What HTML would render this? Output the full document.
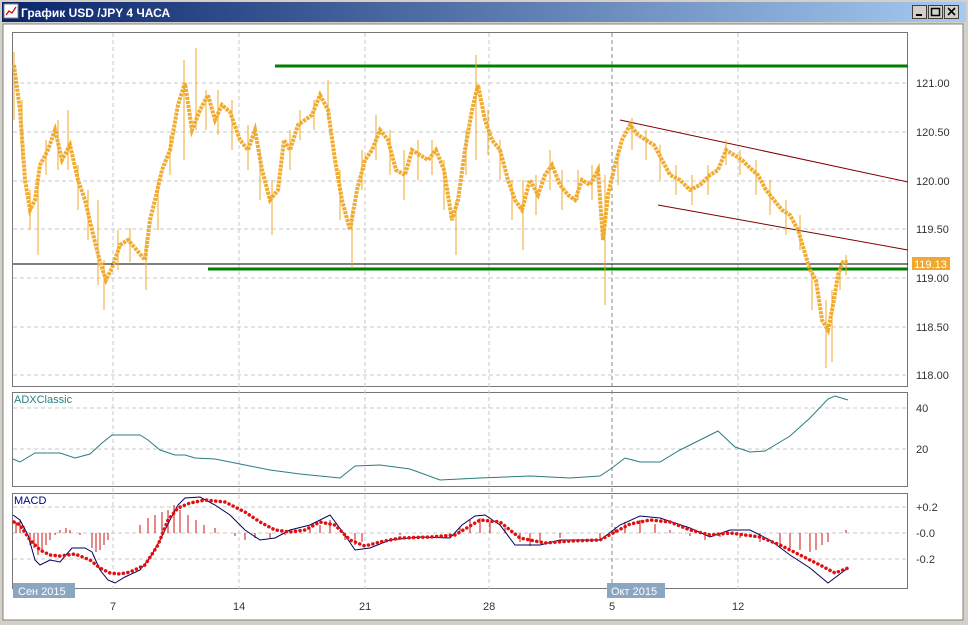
<!DOCTYPE html>
<html><head><meta charset="utf-8"><style>
body{margin:0;width:968px;height:625px;overflow:hidden;background:#d4d0c8;font-family:"Liberation Sans",sans-serif}
</style></head><body>
<svg width="968" height="625" xmlns="http://www.w3.org/2000/svg" style="position:absolute;left:0;top:0">
<defs><linearGradient id="tb" x1="0" x2="1"><stop offset="0" stop-color="#0a246a"/><stop offset="1" stop-color="#a6caf0"/></linearGradient></defs>
<rect x="0" y="0" width="968" height="625" fill="#d4d0c8"/>
<rect x="2" y="2" width="964" height="20" fill="url(#tb)"/>
<rect x="4" y="4" width="14" height="14" fill="#fff" stroke="#888"/>
<polyline points="6,15 9,11 12,13 16,7" fill="none" stroke="#c00" stroke-width="1.2"/>
<text x="21" y="17" font-size="12" font-weight="bold" fill="#fff">График USD /JPY  4 ЧАСА</text>
<g fill="#d4d0c8" stroke="#404040" stroke-width="1">
<rect x="912.5" y="5.5" width="14" height="13"/><rect x="928.5" y="5.5" width="14" height="13"/><rect x="944.5" y="5.5" width="14" height="13"/></g>
<rect x="916" y="14" width="6" height="2" fill="#000"/>
<rect x="931.5" y="8.5" width="8" height="7" fill="none" stroke="#000" stroke-width="1.5"/>
<path d="M948 8l7 7M955 8l-7 7" stroke="#000" stroke-width="1.6"/>
<rect x="3" y="24" width="960" height="596" fill="#fff" stroke="#808080"/>
<g fill="#fff" stroke="#777"><rect x="12.5" y="32.5" width="895" height="354"/><rect x="12.5" y="392.5" width="895" height="94"/><rect x="12.5" y="493.5" width="895" height="95"/></g>
<g stroke="#c8c8c8" stroke-dasharray="4,3">
<path d="M13 83H908M13 132H908M13 181H908M13 229H908M13 278H908M13 327H908M13 375H908M13 408H908M13 449H908M13 507H908M13 533H908M13 559H908"/>
<path d="M113 33V589M239 33V589M365 33V589M489 33V589M738 33V589"/>
</g>
<path d="M612 33V589" stroke="#888" stroke-dasharray="4,3"/>
<g font-size="11" fill="#333">
<text x="916" y="87">121.00</text><text x="916" y="136">120.50</text><text x="916" y="185">120.00</text><text x="916" y="233">119.50</text><text x="916" y="282">119.00</text><text x="916" y="331">118.50</text><text x="916" y="379">118.00</text>
<text x="916" y="412">40</text><text x="916" y="453">20</text>
<text x="916" y="511">+0.2</text><text x="916" y="537">-0.0</text><text x="916" y="563">-0.2</text>
<text x="110" y="610">7</text><text x="233" y="610">14</text><text x="359" y="610">21</text><text x="483" y="610">28</text><text x="609" y="610">5</text><text x="732" y="610">12</text>
</g>
<path d="M275 66H908" stroke="#008000" stroke-width="3"/>
<path d="M208 269H908" stroke="#008000" stroke-width="3"/>
<path d="M13 264H908" stroke="#000" stroke-width="1"/>
<path d="M620 120L908 182M658 205L908 250" stroke="#800000" stroke-width="1"/>
<rect x="912" y="257" width="38" height="13" fill="#f0a830"/>
<text x="914" y="268" font-size="11" fill="#fff">119.13</text>
<polyline fill="none" stroke="#f0ac30" stroke-width="4" stroke-dasharray="3,1" points="14,65 20,110 25,180 30,210 35,200 40,165 48,150 55,130 62,160 70,145 78,180 85,200 92,230 100,262 106,280 112,268 120,245 128,240 135,248 145,260 150,220 155,200 162,170 170,150 178,105 185,83 192,130 200,110 208,95 215,120 222,105 230,112 240,140 248,150 255,130 262,170 270,200 278,190 284,140 290,150 298,125 305,120 312,115 320,95 328,110 335,160 342,200 350,230 357,190 365,160 372,150 380,130 388,140 396,170 405,175 412,150 420,155 428,160 436,150 444,170 452,220 458,200 465,150 472,110 478,85 485,120 492,140 500,150 508,180 515,200 522,210 530,180 538,195 545,175 552,165 560,185 568,195 575,200 582,180 590,185 598,170 603,240 608,195 615,165 622,140 630,125 638,135 646,140 654,145 662,160 670,175 680,180 690,190 700,185 710,175 718,170 726,150 734,155 742,160 750,168 758,175 766,190 774,200 782,210 790,215 798,230 804,250 810,270 816,280 822,320 828,330 834,300 838,275 843,262 848,262"/>
<path fill="none" stroke="#f0a828" stroke-width="1" d="M14 52V120M22 100V160M30 190V230M38 180V255M46 140V175M58 120V170M68 110V170M78 165V210M88 190V240M98 200V285M104 260V310M118 230V270M130 228V262M146 240V290M158 180V230M170 135V175M184 60V160M196 48V130M206 90V130M218 90V135M232 100V150M248 125V170M260 150V200M272 180V235M290 130V170M300 110V140M314 100V130M328 80V120M340 170V220M352 210V268M362 150V190M376 115V160M390 130V175M404 150V200M418 140V180M432 140V175M444 160V210M456 200V255M466 130V175M476 55V160M488 110V155M500 140V180M512 180V220M523 180V250M536 175V215M550 150V190M562 170V210M578 170V200M592 165V200M605 175V305M618 150V185M632 118V150M646 130V160M660 145V180M676 165V195M692 175V205M708 165V195M726 140V165M740 150V175M756 160V195M770 180V215M786 200V235M800 215V250M812 270V310M826 300V368M832 290V362M840 265V290M846 255V275"/>
<text x="14" y="403" font-size="11" fill="#2a8080">ADXClassic</text>
<polyline fill="none" stroke="#2a7c80" stroke-width="1" points="13,459 20,462 35,453 60,453 75,458 90,454 102,443 112,435 140,435 148,440 160,450 175,455 185,455 195,458 215,459 225,461 245,465 270,470 300,474 340,478 355,466 380,465 410,469 440,480 480,478 530,476 570,478 600,476 612,468 625,458 640,462 660,462 680,450 700,440 718,431 735,447 750,452 765,451 790,436 810,418 828,399 835,396 848,400"/>
<text x="14" y="504" font-size="11" fill="#000080">MACD</text>
<path stroke="#d01010" stroke-width="1" d="M16 533V522M20 533V520M24 533V526M30 533V545M34 533V548M38 533V555M42 533V550M46 533V545M50 533V540M55 533V535M60 533V530M66 533V528M70 533V530M80 533V535M92 533V548M96 533V552M100 533V550M104 533V545M108 533V540M140 533V525M148 533V518M155 533V515M162 533V512M168 533V510M174 533V505M180 533V510M188 533V515M196 533V520M204 533V525M215 533V528M235 533V536M245 533V540M255 533V538M270 533V538M285 533V535M300 533V530M310 533V527M320 533V525M330 533V520M345 533V540M355 533V545M362 533V542M400 533V535M460 533V528M470 533V520M480 533V518M490 533V522M505 533V528M520 533V542M530 533V546M540 533V542M560 533V538M600 533V538M615 533V527M625 533V522M640 533V520M655 533V524M670 533V530M690 533V536M705 533V540M720 533V537M740 533V538M760 533V542M780 533V545M790 533V548M800 533V550M810 533V552M816 533V550M822 533V545M828 533V542M846 533V530"/>
<polyline fill="none" stroke="#000060" stroke-width="1" points="13,515 20,520 28,535 35,560 40,565 50,560 60,562 72,548 85,548 92,552 100,570 108,580 115,583 125,577 140,570 150,558 160,540 170,520 178,505 185,498 200,497 215,505 230,515 245,530 260,540 275,538 290,530 310,525 330,515 345,535 355,550 370,548 390,540 420,537 450,538 462,525 475,516 485,515 500,525 515,545 540,545 560,540 600,540 620,525 640,516 660,518 690,528 710,537 730,530 750,530 770,540 790,555 810,568 828,583 848,568"/>
<polyline fill="none" stroke="#e01010" stroke-width="3.5" stroke-dasharray="0.1,4.5" stroke-linecap="round" points="14,522 20,525 30,540 40,550 50,555 60,556 75,554 90,560 100,568 110,573 120,574 130,572 145,565 158,545 168,520 178,508 190,503 205,500 225,502 245,512 260,522 275,530 290,532 305,530 320,522 335,525 350,540 365,546 380,542 400,538 430,537 455,535 480,520 500,522 520,538 545,543 570,541 600,540 615,532 630,524 650,520 670,522 690,530 710,535 730,533 760,537 780,545 800,555 820,565 835,573 848,568"/>
<rect x="13" y="583" width="62" height="15" fill="#8aa6c0"/>
<text x="18" y="595" font-size="11" fill="#fff">Сен 2015</text>
<rect x="607" y="583" width="58" height="15" fill="#8aa6c0"/>
<text x="611" y="595" font-size="11" fill="#fff">Окт 2015</text>
</svg>
</body></html>
